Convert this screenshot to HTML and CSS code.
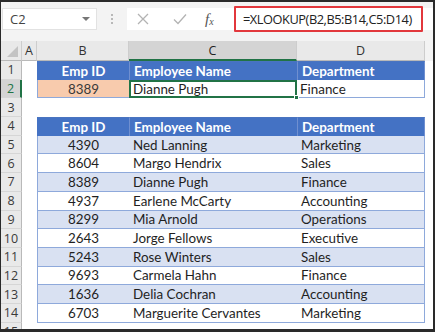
FILE: index.html
```html
<!DOCTYPE html>
<html>
<head>
<meta charset="utf-8">
<link rel="stylesheet" href="styles.css">
</head>
<body>
<div class="frame">
  <div class="toolbar">
    <div class="namebox"><span class="ref">C2</span><span class="drop"></span></div>
    <div class="dots"><i></i><i></i><i></i></div>
    <div class="fbar">
      <div class="ficons">
        <svg class="ico" width="14" height="14" viewBox="0 0 14 14"><path d="M2 2 L12 12 M12 2 L2 12" stroke="#b3b3b3" stroke-width="1.3" fill="none"/></svg>
        <svg class="ico" width="16" height="14" viewBox="0 0 16 14"><path d="M2 7.5 L6 11.5 L14 2.5" stroke="#b3b3b3" stroke-width="1.3" fill="none"/></svg>
        <span class="fx">f<sub>x</sub></span>
      </div>
      <div class="formula">=XLOOKUP(B2,B5:B14,C5:D14)</div>
    </div>
  </div>
  <div class="gap"></div>
  <div class="sheet">
    <div class="ch corner"><span class="tri"></span></div>
    <div class="ch">A</div><div class="ch">B</div><div class="ch sel">C</div><div class="ch">D</div><div class="ch rest"></div>

    <div class="rh">1</div><div class="c"></div>
    <div class="hd t1 ctr tl">Emp ID</div><div class="hd t1">Employee Name</div><div class="hd t1 tr">Department</div><div class="c"></div>

    <div class="rh sel">2</div><div class="c"></div>
    <div class="c1 ctr orange">8389</div><div class="c1 active">Dianne Pugh<span class="handle"></span></div><div class="c1 lastc">Finance</div><div class="c"></div>

    <div class="rh">3</div><div class="c"></div><div class="c"></div><div class="c"></div><div class="c"></div><div class="c"></div>

    <div class="rh">4</div><div class="c"></div>
    <div class="hd ctr tl">Emp ID</div><div class="hd">Employee Name</div><div class="hd tr">Department</div><div class="c"></div>

    <div class="rh">5</div><div class="c"></div>
    <div class="d alt ctr fl">4390</div><div class="d alt">Ned Lanning</div><div class="d alt lr">Marketing</div><div class="c"></div>

    <div class="rh">6</div><div class="c"></div>
    <div class="d ctr fl">8604</div><div class="d">Margo Hendrix</div><div class="d lr">Sales</div><div class="c"></div>

    <div class="rh">7</div><div class="c"></div>
    <div class="d alt ctr fl">8389</div><div class="d alt">Dianne Pugh</div><div class="d alt lr">Finance</div><div class="c"></div>

    <div class="rh">8</div><div class="c"></div>
    <div class="d ctr fl">4937</div><div class="d">Earlene McCarty</div><div class="d lr">Accounting</div><div class="c"></div>

    <div class="rh">9</div><div class="c"></div>
    <div class="d alt ctr fl">8299</div><div class="d alt">Mia Arnold</div><div class="d alt lr">Operations</div><div class="c"></div>

    <div class="rh">10</div><div class="c"></div>
    <div class="d ctr fl">2643</div><div class="d">Jorge Fellows</div><div class="d lr">Executive</div><div class="c"></div>

    <div class="rh">11</div><div class="c"></div>
    <div class="d alt ctr fl">5243</div><div class="d alt">Rose Winters</div><div class="d alt lr">Sales</div><div class="c"></div>

    <div class="rh">12</div><div class="c"></div>
    <div class="d ctr fl">9693</div><div class="d">Carmela Hahn</div><div class="d lr">Finance</div><div class="c"></div>

    <div class="rh">13</div><div class="c"></div>
    <div class="d alt ctr fl">1636</div><div class="d alt">Delia Cochran</div><div class="d alt lr">Accounting</div><div class="c"></div>

    <div class="rh">14</div><div class="c"></div>
    <div class="d ctr fl">6703</div><div class="d">Marguerite Cervantes</div><div class="d lr">Marketing</div><div class="c"></div>

    <div class="rh">15</div><div class="c"></div><div class="c"></div><div class="c"></div><div class="c"></div><div class="c"></div>
  </div>
</div>
</body>
</html>
```

FILE: styles.css
```css
* { box-sizing: border-box; }
html, body { margin: 0; padding: 0; }
body { background: #fff; }

.frame {
  width: 435px;
  height: 332px;
  overflow: hidden;
  border-style: solid;
  border-color: #2a2a2a;
  border-width: 2px 2px 3px 1px;
  background: #fff;
  font-family: "Lato", "Open Sans", sans-serif;
  display: flex;
  flex-direction: column;
}

.toolbar {
  height: 34px;
  flex: none;
  background: #f3f3f3;
  display: flex;
  align-items: center;
  padding-left: 1px;
}

.namebox {
  width: 95px;
  height: 22px;
  background: #fff;
  border: 1px solid #e2e2e2;
  display: flex;
  align-items: center;
  justify-content: space-between;
  padding: 0 6px 0 7px;
}
.ref {
  font-family: "Open Sans", "Liberation Sans", sans-serif;
  font-size: 13px;
  color: #444;
}
.drop {
  width: 0; height: 0;
  border-left: 4px solid transparent;
  border-right: 4px solid transparent;
  border-top: 4px solid #777;
}

.dots {
  width: 30px;
  display: flex;
  flex-direction: column;
  align-items: center;
  gap: 2px;
}
.dots i {
  width: 2px; height: 2px;
  background: #b8b8b8;
  display: block;
}

.fbar {
  flex: 1;
  height: 22px;
  background: #fff;
  display: flex;
  align-items: center;
}
.ficons {
  width: 107px;
  display: flex;
  align-items: center;
  padding-left: 9px;
}
.ficons .ico:first-child { margin-right: 22px; }
.ficons .ico:nth-child(2) { margin-right: 17px; }
.fx {
  font-family: "Liberation Serif", "DejaVu Serif", serif;
  font-style: italic;
  font-size: 15px;
  color: #555;
  line-height: 1;
}
.fx sub { font-size: 10px; vertical-align: -1px; }

.formula {
  width: 189px;
  height: 26px;
  margin: -2px 0;
  border: 2.5px solid #e2373c;
  border-radius: 1px;
  display: flex;
  align-items: center;
  padding-left: 7px;
  font-family: "Open Sans", "Liberation Sans", sans-serif;
  font-size: 12.8px;
  letter-spacing: -0.45px;
  color: #222;
  background: #fff;
  white-space: nowrap;
}

.gap { height: 5px; flex: none; background: #f3f3f3; }

.sheet {
  flex: 1;
  display: grid;
  grid-template-columns: 21px 15px 92px 168px 128px 1fr;
  grid-template-rows: 20px repeat(15, 18.7px);
  font-size: 13.4px;
  color: #1f1f1f;
}

.ch {
  background: #e9e9e9;
  border-right: 1px solid #cdcdcd;
  border-bottom: 1px solid #b9b9b9;
  display: flex;
  align-items: center;
  justify-content: center;
  font-family: "Open Sans", "Liberation Sans", sans-serif;
  font-size: 12.5px;
  color: #333;
}
.ch.sel {
  background: #d4d4d4;
  border-bottom: 2px solid #217346;
  color: #222;
}
.ch.rest { background: #f3f3f3; border-right: none; border-bottom: none; }
.corner { position: relative; }
.tri {
  position: absolute;
  right: 3px; bottom: 3px;
  width: 0; height: 0;
  border-left: 11px solid transparent;
  border-bottom: 11px solid #c3c3c3;
}

.rh {
  background: #e9e9e9;
  border-right: 1px solid #b9b9b9;
  border-bottom: 1px solid #d6d6d6;
  display: flex;
  align-items: center;
  justify-content: center;
  font-family: "Open Sans", "Liberation Sans", sans-serif;
  font-size: 12.5px;
  color: #3a3a3a;
}
.rh.sel {
  background: #d4d4d4;
  border-right: 2px solid #217346;
  color: #217346;
}

.c { background: #fff; }

.hd, .d, .c1 {
  display: flex;
  align-items: center;
  padding-left: 4px;
  white-space: nowrap;
  overflow: visible;
}
.ctr { justify-content: center; padding-left: 0; }

.hd {
  background: #4472c4;
  color: #fff;
  font-weight: 700;
  border-top: 1px solid #4a74c0;
  border-left: 1px solid #6f8fd0;
}
.hd.tl { border-left: 1px solid #4472c4; }
.hd.tr { border-right: 1px solid #6f8fd0; }

.c1 {
  background: #fff;
  border-bottom: 1px solid #8ea9db;
  border-left: 1px solid #8ea9db;
}
.orange { background: #f8cbad; color: #3a3a3a; border-left: 1px solid #8ea9db; }
.active {
  position: relative;
  border: 2px solid #217346;
  padding-left: 2px;
}
.handle {
  position: absolute;
  right: -4px; bottom: -4px;
  width: 5px; height: 5px;
  background: #217346;
  border: 1px solid #fff;
}
.lastc { border-right: 1px solid #8ea9db; border-left: none; padding-left: 3px; }

.d {
  background: #fff;
  border-bottom: 1px solid #8ea9db;
  position: relative;
  z-index: 1;
}
.d.alt { background: #d9e1f2; }
.d.fl { border-left: 1px solid #8ea9db; }
.d.lr { border-right: 1px solid #8ea9db; }
```
